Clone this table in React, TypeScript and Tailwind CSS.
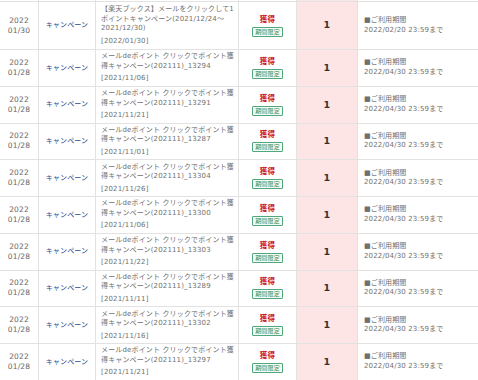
import React from "react";

type Row = {
  md: string;
  lines: string[];
  date: string;
  exp: string;
  first?: boolean;
};

const mk = (id: string, d: string): Row => ({
  md: "01/28",
  lines: ["メールdeポイント クリックでポイント獲", `得キャンペーン(202111)_${id}`],
  date: d,
  exp: "2022/04/30 23:59まで",
});

const rows: Row[] = [
  {
    md: "01/30",
    lines: ["【楽天ブックス】メールをクリックして1", "ポイントキャンペーン(2021/12/24～", "2021/12/30)"],
    date: "[2022/01/30]",
    exp: "2022/02/20 23:59まで",
    first: true,
  },
  mk("13294", "[2021/11/06]"),
  mk("13291", "[2021/11/21]"),
  mk("13287", "[2021/11/01]"),
  mk("13304", "[2021/11/26]"),
  mk("13300", "[2021/11/06]"),
  mk("13303", "[2021/11/22]"),
  mk("13289", "[2021/11/11]"),
  mk("13302", "[2021/11/16]"),
  mk("13297", "[2021/11/21]"),
];

const grid = "grid grid-cols-[38px_57px_143px_58px_61px_1fr]";

export default function App() {
  return (
    <div
      className="w-[478px] h-[380px] overflow-hidden bg-white text-[7px] tracking-[0.15px] text-[#666]"
      style={{ fontFamily: '"DejaVu Sans", "Noto Sans CJK JP", sans-serif' }}
    >
      <div className={`${grid} h-[1px]`}>
        <div />
        <div className="border-l border-[#e2e2e2]" />
        <div className="border-l border-[#e2e2e2]" />
        <div className="border-l border-[#e2e2e2]" />
        <div className="border-l border-[#e2e2e2] bg-[#fde5e5]" />
        <div className="border-l border-[#e2e2e2]" />
      </div>
      {rows.map((r, i) => (
        <div
          key={i}
          className={`${grid} border-t border-[#e2e2e2] ${r.first ? "h-[48px]" : "h-[36.75px]"}`}
        >
          <div className="flex flex-col items-center justify-center leading-[10px] text-[7.5px] text-[#666]">
            <span>2022</span>
            <span>{r.md}</span>
          </div>
          <div className="flex items-center justify-center border-l border-[#e2e2e2] text-[#2b4a8b]">
            キャンペーン
          </div>
          <div className="flex flex-col justify-center border-l border-[#e2e2e2] pl-[5px] text-[#707070] whitespace-nowrap overflow-hidden">
            {r.lines.map((l, j) => (
              <span key={j} className="leading-[9.5px]">
                {l}
              </span>
            ))}
            <span className="leading-[10px] mt-[2px]">{r.date}</span>
          </div>
          <div className="flex flex-col items-center justify-center gap-[3px] border-l border-[#e2e2e2]">
            <span className="text-[#c8102e] font-bold leading-[9px] text-[7.5px]">獲得</span>
            <span className="border border-[#4fa77c] rounded-[1px] px-[2px] text-[6px] leading-[8px] text-[#2f8f5f] bg-[#f4fbf7]">
              期間限定
            </span>
          </div>
          <div className="flex items-center justify-center border-l border-[#e2e2e2] bg-[#fde5e5] text-[9.5px] font-semibold text-[#333]">
            1
          </div>
          <div className="flex flex-col justify-center border-l border-[#e2e2e2] pl-[6px] text-[#707070] leading-[9.5px]">
            <span>■ご利用期間</span>
            <span>{r.exp}</span>
          </div>
        </div>
      ))}
    </div>
  );
}
